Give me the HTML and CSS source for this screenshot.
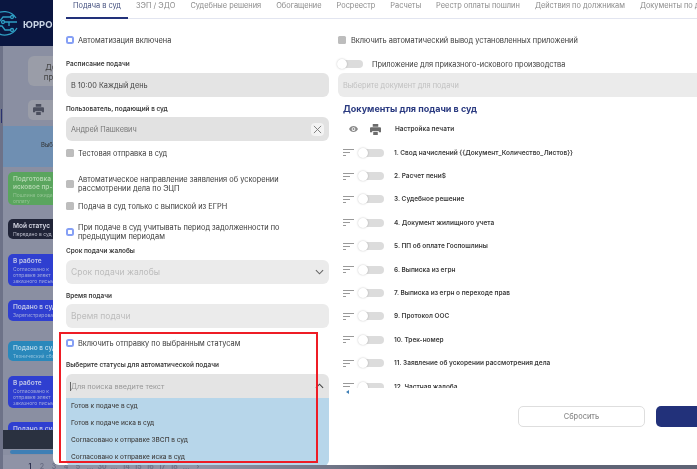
FILE: index.html
```html
<!DOCTYPE html>
<html lang="ru">
<head>
<meta charset="utf-8">
<title>Подача в суд</title>
<link rel="stylesheet" href="styles.css">
</head>
<body>
<div class="screen">
  <div class="page">
    <header class="topbar">
      <svg class="logo" viewBox="0 0 30 30" width="30" height="30" fill="none" stroke="#2f9fc4" stroke-width="1.3">
        <path d="M3 8a14 14 0 0 1 22 2M26 20A14 14 0 0 1 4 23"/>
        <path d="M0 14h8l4-5h8M0 18h11l3 4h6M13 14h13M18 14v4"/>
        <circle cx="21" cy="9" r="1.5"/><circle cx="21" cy="22" r="1.5"/><circle cx="12" cy="14" r="1.5"/>
      </svg>
      <span class="brand">ЮРРОБОТ</span>
    </header>
    <div class="page-body">
      <div class="rail"><span class="rail-mark"></span></div>
      <div class="page-main">
        <div class="info-card">Документы<br>просрочены</div>
        <div class="tools"><svg class="print-icon" viewBox="0 0 12 12" width="11" height="11"><path fill="#4b4f5e" d="M3 0h6v3H3zM1 3.5h10a1 1 0 0 1 1 1V9H9.500V7.500h-7V9H0V4.500a1 1 0 0 1 1-1zM3.500 8.500h5V12h-5z"/></svg></div>
        <div class="band">Выбрано</div>
        <div class="card card-green"><b>Подготовка<br>исковое пр-во</b><small>Пошлина ожидает<br>оплату</small></div>
        <div class="card card-dark"><b>Мой статус</b><small>Передано в суд</small></div>
        <div class="card card-blue"><b>В работе</b><small>Согласовано к<br>отправке элект<br>заказного письма</small></div>
        <div class="card card-blue card-short"><b>Подано в суд</b><small>Зарегистрировано</small></div>
        <div class="card card-teal"><b>Подано в суд</b><small>Технический сбой</small></div>
        <div class="card card-blue"><b>В работе</b><small>Согласовано к<br>отправке элект<br>заказного письма</small></div>
        <div class="card card-blue card-last"><b>Подано в суд</b></div>
        <div class="foot-panel"></div>
        <div class="hscroll"><span class="hthumb"></span></div>
        <div class="pager"><span class="pager-on">1</span><span>2</span><span>3</span><span>4</span><span>5</span><span>…</span><span>30</span><span>…</span><span>14</span><span>15</span><span>16</span><span>17</span><span>18</span><span>…</span><span>›</span></div>
      </div>
    </div>
  </div>

  <section class="modal">
    <nav class="tabs">
      <a class="tab tab-active">Подача в суд</a>
      <a class="tab">ЗЭП / ЭДО</a>
      <a class="tab">Судебные решения</a>
      <a class="tab">Обогащение</a>
      <a class="tab">Росреестр</a>
      <a class="tab">Расчеты</a>
      <a class="tab">Реестр оплаты пошлин</a>
      <a class="tab">Действия по должникам</a>
      <a class="tab">Документы по должникам</a>
    </nav>
    <div class="columns">
      <div class="col-left">
        <label class="check first-check"><span class="box box-on"></span>Автоматизация включена</label>
        <div class="field-label label-schedule">Расписание подачи</div>
        <div class="input input-value">В 10:00 Каждый день</div>
        <div class="field-label label-user">Пользователь, подающий в суд</div>
        <div class="input input-user">Андрей Пашкевич
          <span class="clear"><svg viewBox="0 0 10 10" width="9" height="9" fill="none" stroke="#777" stroke-width="1"><path d="M1 1l8 8M9 1l-8 8"/></svg></span>
        </div>
        <label class="check check-test"><span class="box"></span>Тестовая отправка в суд</label>
        <label class="check check-two"><span class="box"></span><span>Автоматическое направление заявления об ускорении рассмотрении дела по ЭЦП</span></label>
        <label class="check check-egrn"><span class="box"></span>Подача в суд только с выпиской из ЕГРН</label>
        <label class="check check-two check-period"><span class="box box-on"></span><span>При подаче в суд учитывать период задолженности по предыдущим периодам</span></label>
        <div class="field-label label-large label-term">Срок подачи жалобы</div>
        <div class="input input-muted">Срок подачи жалобы
          <svg class="chev" viewBox="0 0 10 6" width="9" height="6" fill="none" stroke="#666" stroke-width="1.200"><path d="M1 1l4 4 4-4"/></svg>
        </div>
        <div class="field-label label-large label-time">Время подачи</div>
        <div class="input input-muted">Время подачи</div>
        <label class="check check-status"><span class="box box-on"></span>Включить отправку по выбранным статусам</label>
        <div class="field-label label-large label-statuses">Выберите статусы для автоматической подачи</div>
        <div class="input input-search"><span class="caret"></span>Для поиска введите текст
          <svg class="chev" viewBox="0 0 10 6" width="9" height="6" fill="none" stroke="#444" stroke-width="1.200"><path d="M1 5l4-4 4 4"/></svg>
        </div>
        <ul class="options">
          <li>Готов к подаче в суд</li>
          <li>Готов к подаче иска в суд</li>
          <li>Согласовано к отправке ЗВСП в суд</li>
          <li>Согласовано к отправке иска в суд</li>
        </ul>
      </div>
      <div class="col-right">
        <label class="check first-check check-wide"><span class="box"></span>Включить автоматический вывод установленных приложений</label>
        <div class="toggle-line"><span class="toggle"></span>Приложение для приказного-искового производства</div>
        <div class="input input-doc">Выберите документ для подачи</div>
        <h2 class="docs-title">Документы для подачи в суд</h2>
        <div class="docs-head">
          <svg class="eye" viewBox="0 0 12 8" width="9" height="6" fill="#888"><path d="M6 0C3.500 0 1.300 1.600 0 4c1.300 2.400 3.500 4 6 4s4.700-1.600 6-4C10.700 1.600 8.500 0 6 0zm0 6.500A2.500 2.500 0 1 1 6 1.500a2.500 2.500 0 0 1 0 5z"/><circle cx="6" cy="4" r="1.300"/></svg>
          <svg class="printer" viewBox="0 0 12 12" width="11" height="11"><path fill="#6c6c6c" d="M3 0h6v3H3zM1 3.500h10a1 1 0 0 1 1 1V9H9.500V7.500h-7V9H0V4.500a1 1 0 0 1 1-1zM3.500 8.500h5V12h-5z"/></svg>
          <span>Настройка печати</span>
        </div>
        <ul class="docs">
          <li><svg class="grip" viewBox="0 0 11 7" width="11" height="7"><path d="M0 .5h11M0 3.500h7M0 6.500h3" stroke="#999" fill="none"/></svg><span class="toggle toggle-doc"></span>1. Свод начислений {{Документ_Количество_Листов}}</li>
          <li><svg class="grip" viewBox="0 0 11 7" width="11" height="7"><path d="M0 .5h11M0 3.500h7M0 6.500h3" stroke="#999" fill="none"/></svg><span class="toggle toggle-doc"></span>2. Расчет пени$</li>
          <li><svg class="grip" viewBox="0 0 11 7" width="11" height="7"><path d="M0 .5h11M0 3.500h7M0 6.500h3" stroke="#999" fill="none"/></svg><span class="toggle toggle-doc"></span>3. Судебное решение</li>
          <li><svg class="grip" viewBox="0 0 11 7" width="11" height="7"><path d="M0 .5h11M0 3.500h7M0 6.500h3" stroke="#999" fill="none"/></svg><span class="toggle toggle-doc"></span>4. Документ жилищного учета</li>
          <li><svg class="grip" viewBox="0 0 11 7" width="11" height="7"><path d="M0 .5h11M0 3.500h7M0 6.500h3" stroke="#999" fill="none"/></svg><span class="toggle toggle-doc"></span>5. ПП об оплате Госпошлины</li>
          <li><svg class="grip" viewBox="0 0 11 7" width="11" height="7"><path d="M0 .5h11M0 3.500h7M0 6.500h3" stroke="#999" fill="none"/></svg><span class="toggle toggle-doc"></span>6. Выписка из егрн</li>
          <li><svg class="grip" viewBox="0 0 11 7" width="11" height="7"><path d="M0 .5h11M0 3.500h7M0 6.500h3" stroke="#999" fill="none"/></svg><span class="toggle toggle-doc"></span>7. Выписка из егрн о переходе прав</li>
          <li><svg class="grip" viewBox="0 0 11 7" width="11" height="7"><path d="M0 .5h11M0 3.500h7M0 6.500h3" stroke="#999" fill="none"/></svg><span class="toggle toggle-doc"></span>9. Протокол ООС</li>
          <li><svg class="grip" viewBox="0 0 11 7" width="11" height="7"><path d="M0 .5h11M0 3.500h7M0 6.500h3" stroke="#999" fill="none"/></svg><span class="toggle toggle-doc"></span>10. Трек-номер</li>
          <li><svg class="grip" viewBox="0 0 11 7" width="11" height="7"><path d="M0 .5h11M0 3.500h7M0 6.500h3" stroke="#999" fill="none"/></svg><span class="toggle toggle-doc"></span>11. Заявление об ускорении рассмотрения дела</li>
          <li><svg class="grip" viewBox="0 0 11 7" width="11" height="7"><path d="M0 .5h11M0 3.500h7M0 6.500h3" stroke="#999" fill="none"/></svg><span class="toggle toggle-doc"></span>12. Частная жалоба</li>
        </ul>
        <div class="scroll-arrow"></div>
        <div class="actions">
          <button class="btn btn-reset">Сбросить</button>
          <button class="btn btn-save" aria-label="Сохранить"></button>
        </div>
      </div>
    </div>
    <div class="highlight"></div>
  </section>
</div>
</body>
</html>
```
FILE: styles.css
```css
* { box-sizing: border-box; }
html, body { margin: 0; padding: 0; }
body { background: #5f6475; font-family: Inter, "Noto Sans", sans-serif; color: #333; }
.screen { position: relative; width: 697px; height: 469px; overflow: hidden; filter: blur(0.6px); }

/* dimmed page behind the modal */
.page { width: 697px; height: 469px; display: flex; flex-direction: column; background: #5f6475; }
.topbar { height: 46px; background: #0a1640; display: flex; align-items: center; color: #fff; flex: none; }
.logo { margin: 0 2px 0 -9px; flex: none; }
.brand { font-size: 9.500px; font-weight: 700; color: #c9d4e4; padding-top: 3px; }
.page-body { display: flex; flex: 1; min-height: 0; background: #8a8fa2; }
.rail { width: 3px; background: #6d7288; }
.rail-mark { display: block; width: 1px; height: 14px; margin: 63px 0 0 1px; background: #2a3270; }
.page-main { width: 694px; display: flex; flex-direction: column; font-size: 6px; }
.info-card { width: 80px; height: 31px; margin: 10px 0 0 25px; background: #9a9da8; border-radius: 6px; text-align: center; font-size: 8px; line-height: 10px; padding-top: 6px; color: #444; }
.tools { width: 60px; height: 20px; margin: 14px 0 0 25px; background: #9a9da8; border-radius: 5px; padding: 4px 5px; }
.print-icon { display: block; }
.band { height: 42px; margin-top: 6px; background: #6f8fb2; padding: 15px 0 0 38px; font-size: 6px; color: #333; }
.card { width: 120px; margin-left: 5px; border-radius: 5px; padding: 3px 5px; color: #c0c6e8; flex: none; line-height: 7px; }
.card b { display: block; font-size: 6.500px; line-height: 8px; font-weight: 600; margin-bottom: 1px; }
.card small { display: block; font-size: 5px; line-height: 6px; color: #a3abdc; }
.card-green { height: 33px; margin-top: 5px; background: #5aa55e; }
.card-green b { color: #b0d6ae; }
.card-green small { color: #92c492; }
.card-dark { height: 20px; margin-top: 14px; background: #202438; }
.card-dark b { color: #d8dae6; }
.card-dark small { color: #b8bac8; }
.card-blue { height: 32px; margin-top: 15px; background: #2f3fd0; }
.card-short { height: 21px; margin-top: 14px; }
.card-teal { height: 20px; margin-top: 20px; background: #2a88bb; }
.card-teal b { color: #b3d6ea; }
.card-teal small { color: #8fc0dc; }
.card-last { margin-top: 14px; height: 30px; }
.foot-panel { height: 20px; margin-top: -22px; background: #2a3140; position: relative; }
.hscroll { height: 6px; padding: 1px 0 0 7px; background: #8a8fa2; }
.hthumb { display: block; width: 120px; height: 4px; border-radius: 2px; background: #3f7fb5; }
.pager { display: flex; padding: 8px 0 0 21px; font-size: 7px; line-height: 8px; font-weight: 600; color: #6b6f85; background: linear-gradient(to right, #8f93a6 200px, #5f6475 400px); height: 14px; }
.pager span { width: 12px; text-align: center; flex: none; }
.pager .pager-on { color: #262a48; }

/* modal */
.modal { position: absolute; left: 53px; top: 0; width: 720px; height: 465px; background: #fff; border-radius: 0 0 6px 6px; overflow: hidden; }
.tabs { display: flex; gap: 1px; height: 19px; margin-left: 13px; border-bottom: 1px solid #e2e5f0; white-space: nowrap; font-size: 7.400px; }
.tab { padding: 0 7px; line-height: 11px; color: #8a8a8a; height: 19px; flex: none; }
.tab-active { color: #44507f; border-bottom: 2px solid #22317a; }

.columns { display: flex; gap: 9px; padding-left: 13px; }
.col-left { width: 263px; flex: none; }
.col-right { width: 372px; flex: none; }

.check { display: flex; align-items: center; gap: 4.500px; font-size: 7.400px; line-height: 9px; color: #3a3a3a; min-height: 12px; }
.check-wide { gap: 5.500px; }
.first-check { margin-top: 15px; }
.box { width: 7.500px; height: 7.500px; flex: none; border-radius: 1.500px; background: #bdbdbd; }
.box-on { background: #fff; border: 2px solid #86a0f5; border-radius: 2.500px; }
.check-test { margin-top: 6px; }
.check-two { margin-top: 16px; }
.check-egrn { margin-top: 7px; }
.check-period { margin-top: 11px; }
.check-status { margin-top: 9px; }

.field-label { height: 10px; line-height: 10px; font-size: 6.450px; font-weight: 600; color: #3c3c3c; white-space: nowrap; }
.label-schedule { margin: 13px 0 4px; }
.label-user { margin: 7px 0 3px; }
.label-term { margin: 5px 0 4px; }
.label-time { margin: 7px 0 3px; }
.label-statuses { margin: 11px 0 4px; }

.input { position: relative; height: 24px; border-radius: 6px; background: #e4e4e4; display: flex; align-items: center; padding-left: 5px; font-size: 7.350px; color: #444; }
.input-user { color: #777; background: #e2e2e2; }
.input-muted { color: #bcbcbc; background: #ebebeb; font-size: 8.500px; }
.input-search { color: #999; background: #e4e4e4; border-radius: 6px 6px 0 0; padding-left: 4px; font-size: 7.300px; }
.input-doc { margin-top: 3px; color: #c0c0c0; background: #ebebeb; width: 372px; font-size: 7.400px; }
.caret { width: 1px; height: 9px; background: #666; margin-right: 0; }
.clear { position: absolute; right: 5px; top: 6px; width: 13px; height: 13px; border-radius: 4px; background: #f3f3f3; display: flex; align-items: center; justify-content: center; }
.chev { position: absolute; right: 5px; top: 9px; }

.options { list-style: none; margin: 0; padding: 0; background: #b7d6ea; height: 68px; border-radius: 0 0 6px 6px; }
.options li { height: 17px; line-height: 17px; padding-left: 5px; font-size: 6.500px; font-weight: 500; color: #444; }

.toggle-line { display: flex; align-items: center; gap: 9px; height: 12px; margin-top: 12px; font-size: 7.380px; color: #3a3a3a; }
.toggle { position: relative; display: block; width: 25px; height: 8px; border-radius: 4px; background: #dcdcdc; flex: none; }
.toggle::before { content: ""; position: absolute; left: -1px; top: -1px; width: 10px; height: 10px; border-radius: 50%; background: #fff; box-shadow: 0 0 2px rgba(0,0,0,.25); }
.toggle-doc { margin: 0 10px 0 5px; }

.docs-title { margin: 5px 0 0 5px; height: 14px; line-height: 14px; font-size: 9px; font-weight: 700; color: #2a3a80; }
.docs-head { display: flex; align-items: center; height: 14px; margin-top: 6px; font-size: 6.480px; font-weight: 600; color: #3c3c3c; }
.eye { margin-left: 11px; flex: none; }
.printer { margin-left: 12px; flex: none; }
.docs-head span { margin-left: 14px; }
.docs { list-style: none; margin: 5px 0 0; padding: 0 0 0 5px; height: 247px; overflow: hidden; }
.docs li { display: flex; align-items: center; height: 23.400px; font-size: 6.500px; font-weight: 600; color: #3c3c3c; white-space: nowrap; }
.grip { flex: none; }
.scroll-arrow { width: 0; height: 0; margin: 2px 0 0 8px; border: 2px solid transparent; border-right: 3px solid #3f7fb5; border-left: 0; }
.actions { display: flex; gap: 11px; margin: 12px 0 0 180px; }
.btn { height: 21px; width: 127px; border-radius: 5px; font: 500 7.400px Inter, sans-serif; flex: none; }
.btn-reset { background: #fff; border: 1px solid #dedede; color: #8c8c8c; }
.btn-save { background: #22317a; border: 0; color: #fff; }

.highlight { position: absolute; left: 6px; top: 332px; width: 259px; height: 131px; border: 2px solid #ee1c25; pointer-events: none; }
```
